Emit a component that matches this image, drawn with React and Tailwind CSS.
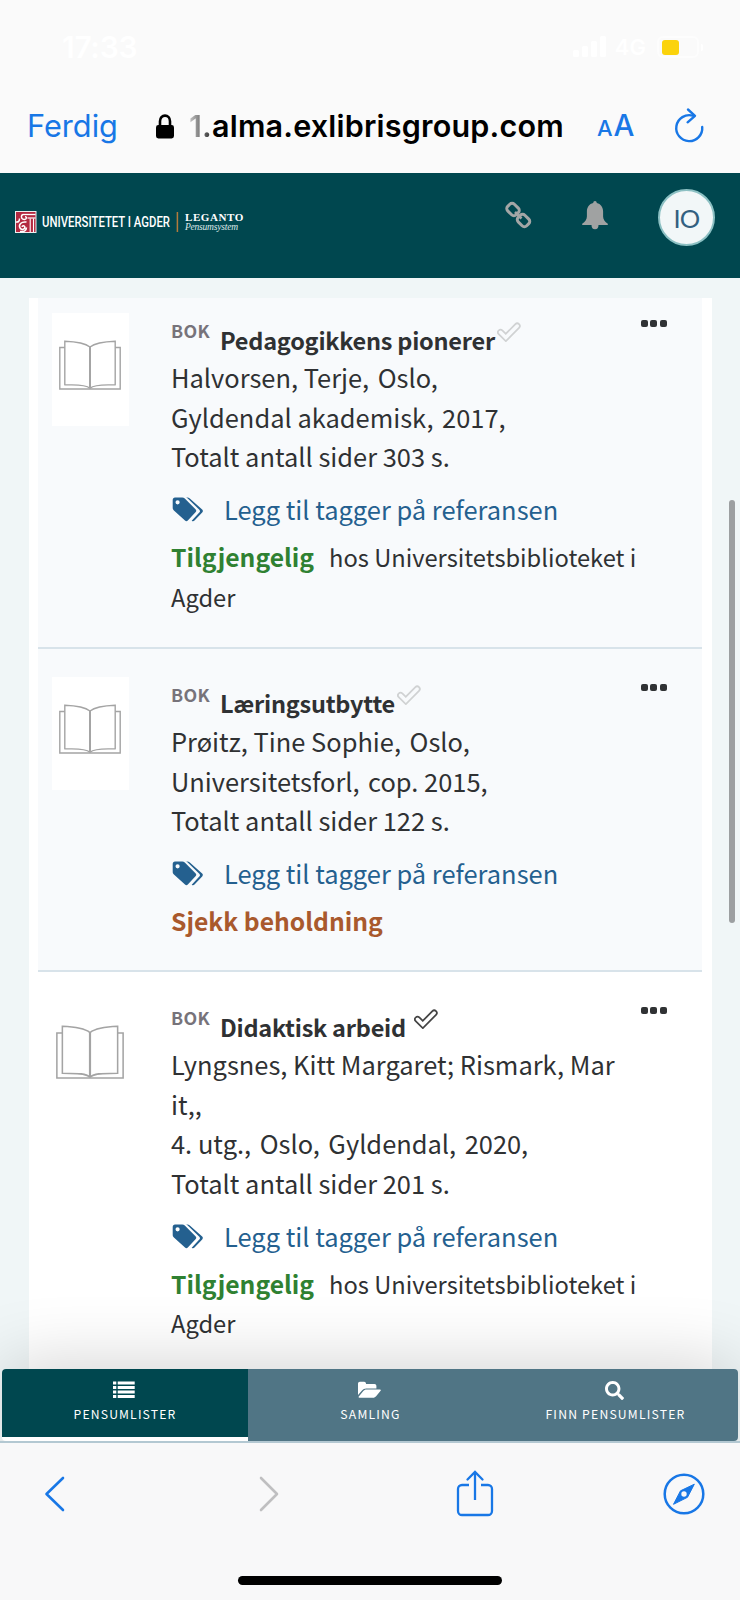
import React from "react";
import { FaSearch } from "react-icons/fa";

const SOURCE = "font-['Noto_Sans_CJK_JP',sans-serif]";

const citations = [
    {
        id: 1,
        title: "Pedagogikkens pionerer",
        lines: [["Halvorsen, Terje,", "Oslo,"], ["Gyldendal akademisk,", "2017,"], ["Totalt antall sider 303 s."]],
        available: true,
        read: false,
        shaded: true,
    },
    {
        id: 2,
        title: "Læringsutbytte",
        lines: [["Prøitz, Tine Sophie,", "Oslo,"], ["Universitetsforl,", "cop. 2015,"], ["Totalt antall sider 122 s."]],
        available: false,
        read: false,
        shaded: true,
    },
    {
        id: 3,
        title: "Didaktisk arbeid",
        lines: [
            ["Lyngsnes, Kitt Margaret; Rismark, Mar"],
            ["it,,"],
            ["4. utg.,", "Oslo,", "Gyldendal,", "2020,"],
            ["Totalt antall sider 201 s."],
        ],
        available: true,
        read: true,
        shaded: false,
    },
];

const StatusBar = () => (
    <div className="flex h-[96px] items-start justify-between pt-[31px] pl-[62px] pr-[37px] text-white">
        <span className="text-[30px] leading-[32px] font-semibold tracking-[-0.3px]">17:33</span>
        <div className="flex items-center pt-[5px]">
            <svg width="34" height="22" viewBox="0 0 34 22" fill="currentColor">
                <rect x="0" y="14" width="6" height="7" rx="1.5" />
                <rect x="9" y="10" width="6" height="11" rx="1.5" />
                <rect x="18" y="5" width="6" height="16" rx="1.5" />
                <rect x="27" y="0" width="6" height="21" rx="1.5" />
            </svg>
            <span className="ml-[8px] text-[22px] leading-[22px] font-semibold">4G</span>
            <div className="ml-[11px] flex h-[22px] w-[42px] items-center rounded-[6px] border-2 border-white/50 pl-[3px]">
                <div className="h-[15px] w-[17px] rounded-[3px] bg-[#fbd30c]" />
            </div>
            <div className="ml-[2px] h-[7px] w-[2px] rounded-r bg-white" />
        </div>
    </div>
);

const AddressBar = () => (
    <div className="flex h-[77px] items-center pl-[27px] pb-[17px] text-[#1877e6]">
        <span className="w-[129px] text-[30.700px] leading-[40px]">Ferdig</span>
        <svg width="18" height="25" viewBox="0 0 18 25" className="shrink-0">
            <path d="M4 12V7.2a5 5.6 0 0 1 10 0V12" fill="none" stroke="#000" strokeWidth="2.6" />
            <rect x="0" y="11" width="18" height="13.5" rx="2.4" fill="#000" />
        </svg>
        <span className="ml-[15px] w-[378px] text-[30.500px] leading-[40px] font-semibold tracking-[0.200px] whitespace-nowrap text-black">
            <span className="bg-linear-to-r from-[#c8c8c8] to-[#333] bg-clip-text text-transparent">1.</span>alma.exlibrisgroup.com
        </span>
        <span className="ml-[30px] flex w-[77px] items-baseline gap-[1px] leading-[40px]">
            <span className="text-[22px] font-medium">A</span>
            <span className="text-[29.500px] font-medium">A</span>
        </span>
        <svg width="30" height="36" viewBox="0 0 30 36" className="-mt-[2px]" fill="none" stroke="currentColor" strokeWidth="2.4" strokeLinecap="round" strokeLinejoin="round">
            <path d="M19 8.700A13 13 0 1 0 28.200 20" />
            <path d="M14 2.500l7 6.300-7.400 6.500" />
        </svg>
    </div>
);

const Logo = () => (
    <svg width="232" height="26" viewBox="0 0 232 26">
        <rect x="0.5" y="2.5" width="20.5" height="21" fill="#b32940" stroke="#eee" strokeWidth="1" />
        <path d="M8 5.500h12.500" stroke="#fff" strokeWidth="1.300" />
        <path d="M12.500 9h8" stroke="#fff" strokeWidth="1.200" />
        <path d="M15.200 9.500V23M18.500 9.500V23" stroke="#fff" strokeWidth="1.100" />
        <path d="M8 5.500c-2.500 1-2 5 1.500 5 2.500-0.300 2.500-3 0.500-2.800" fill="none" stroke="#fff" strokeWidth="1.400" />
        <path d="M1 13c2.500 0.500 3.500-1 3.500-3.500" fill="none" stroke="#fff" strokeWidth="1.500" />
        <path d="M11.500 13c-5.500-0.800-8.200 3-6.500 6 1.500 2.500 5.300 1.300 4.800-1.200-0.500-1.500-2.600-1.200-2.700 0.200M5 22.500c4 0.500 6.500-1 6.500-4" fill="none" stroke="#fff" strokeWidth="1.500" />
        <text x="27" y="18" textLength="128" lengthAdjust="spacingAndGlyphs" className="fill-white font-[Roboto,sans-serif] text-[14px] font-medium">UNIVERSITETET I AGDER</text>
        <path d="M162.400 3v20" stroke="#b27b3c" strokeWidth="1.500" />
        <text x="170" y="11.700" textLength="59" lengthAdjust="spacingAndGlyphs" className="fill-white font-['Liberation_Serif',serif] text-[10px] font-bold tracking-[0.500px]">LEGANTO</text>
        <text x="170" y="20.700" textLength="53" lengthAdjust="spacing" className="fill-[#dfe9ea] font-['Liberation_Serif',serif] text-[9.500px] italic">Pensumsystem</text>
    </svg>
);

const Header = () => (
    <header className="flex h-[105px] bg-[#00474f] pl-[15px]">
        <div className="w-[489px] pt-[36px]">
            <Logo />
        </div>
        <svg width="28" height="28" viewBox="0 0 28 28" className="mt-[28px]" fill="none" stroke="#a3a6a6" strokeWidth="3">
            <rect x="-6" y="-4.700" width="12" height="9.400" rx="3.200" transform="translate(9 8.500) rotate(45)" />
            <rect x="-6" y="-4.700" width="12" height="9.400" rx="3.200" transform="translate(19.500 19.500) rotate(45)" />
            <path d="M11 11l6.500 6.500" strokeWidth="2.600" />
        </svg>
        <svg width="26" height="30" viewBox="0 0 26 30" className="mt-[27px] ml-[50px]" fill="#a0a2a2">
            <path d="M13 1c1.100 0 1.700 0.700 1.800 2 3.900 0.900 6.300 4.200 6.300 8.400v5.200c0 3 1.800 5.200 4.700 7.200V25H0.200v-1.200c2.900-2 4.700-4.200 4.700-7.200v-5.200c0-4.200 2.400-7.500 6.300-8.400C11.300 1.700 11.900 1 13 1z" />
            <path d="M9.500 25h7a3.500 4.200 0 0 1-7 0z" />
        </svg>
        <div className="mt-[16px] ml-[50px] flex h-[57px] w-[57px] items-center justify-center rounded-full border-2 border-[#8cc0c3] bg-[#f2f7f8]">
            <span className="font-[Lato,sans-serif] text-[25.500px] leading-[30px] tracking-[-0.800px] text-[#336080]">IO</span>
        </div>
    </header>
);

const BookIcon = ({ large }) => (
    <svg
        width={large ? 68 : 62}
        height={large ? 54 : 50}
        viewBox="0 0 62 50"
        preserveAspectRatio="none"
        fill="none"
        stroke="#a4a4a4"
        strokeWidth="1.400"
    >
        <path d="M5.800 7.500H0.800V49h60.400V7.500h-5" />
        <path d="M31 7C26 3 14 1.500 5.800 1.200v43.500c9 0.500 20-1 25.200 3.500 5.200-4.500 16.200-3 25.200-3.500V1.200C48 1.500 36 3 31 7z" />
        <path d="M31 7v41" strokeWidth="2" />
    </svg>
);

const TagsIcon = () => (
    <svg width="32" height="26" viewBox="0 0 32 26" fill="currentColor">
        <path
            fillRule="evenodd"
            d="M3 0.500h7.200c1 0 1.900 0.400 2.600 1.100l10.700 10.700c1 1 1 2 0 3l-7.700 8.300c-0.900 0.900-1.900 0.900-2.800 0L1.900 13.500C1 12.600 0.700 11.800 0.700 10.800V3C0.700 1.400 1.600 0.500 3 0.500zM5.600 3.200a2.100 2.100 0 1 0 0 4.200 2.100 2.100 0 0 0 0-4.200z"
        />
        <path d="M13.500 0.500h1.700c1 0 1.900 0.400 2.600 1.100l12.400 11c0.900 0.900 0.900 1.900 0 2.800l-7.700 8.200c-0.900 0.900-1.800 1-2.800 0.200l7.600-8.200c0.900-0.900 0.900-2 0-2.900L16 1.700C15.300 1 14.500 0.600 13.500 0.500z" />
    </svg>
);

const CheckIcon = ({ read, shaded }) => (
    <svg width="24" height="20" viewBox="0 0 24 20" fill="none" strokeLinecap="round">
        <path d="M3.500 10.300l5.300 5.200L20.200 4" stroke={read ? "#444" : "#d0d2d3"} strokeWidth="6.900" />
        <path d="M3.500 10.300l5.300 5.200L20.200 4" stroke={shaded ? "#f8fafc" : "#fff"} strokeWidth="3.400" />
    </svg>
);

const Citation = ({ item }) => (
    <div className={`flex h-auto border-b-2 border-[#d8e3ea] pl-[14px] ${item.shaded ? "bg-[#f8fafc]" : "bg-white"}`}>
        <div className="mt-[28px] flex h-[113px] w-[77px] shrink-0 justify-center bg-white pr-[2px]">
            <div className={item.shaded ? "pt-[27px]" : "pt-[25px]"}>
                <BookIcon large={!item.shaded} />
            </div>
        </div>
        <div className="ml-[42px] w-[470px] shrink-0 pb-[29.700px] text-[#2f3133]">
            <div className="flex h-[72px] items-start">
                <span className="mt-[30px] w-[49px] text-[17.800px] leading-[30px] font-bold tracking-[0.300px] text-[#77737a]">BOK</span>
                <span className="mt-[36.500px] text-[23.500px] leading-[36px] font-bold tracking-[-0.240px] whitespace-nowrap">{item.title}</span>
                <span className={item.read ? "mt-[36.500px] ml-[8px]" : "mt-[36.500px] ml-[2px]"}>
                    <CheckIcon read={item.read} shaded={item.shaded} />
                </span>
            </div>
            {item.lines.map((parts) => (
                <div key={parts[0]} className="flex gap-[8.500px] text-[25.450px] leading-[39.670px] whitespace-nowrap">
                    {parts.map((part) => (
                        <span key={part}>{part}</span>
                    ))}
                </div>
            ))}
            <div className="mt-[13px] flex h-[40px] items-center text-[#24608f]">
                <span className="mt-[2px] ml-[1px]">
                    <TagsIcon />
                </span>
                <span className="ml-[20px] text-[25.450px] leading-[40px] whitespace-nowrap">Legg til tagger på referansen</span>
            </div>
            <div className="mt-[7.800px] text-[23.700px] leading-[39.700px] whitespace-nowrap">
                {item.available ? (
                    <>
                        <div className="flex items-baseline gap-[15px]">
                            <span className="text-[24.700px] font-bold text-[#2f8132]">Tilgjengelig</span>
                            <span>hos Universitetsbiblioteket i</span>
                        </div>
                        <div>Agder</div>
                    </>
                ) : (
                    <div className="text-[24.700px] font-bold text-[#a9592d]">Sjekk beholdning</div>
                )}
            </div>
        </div>
        <div className="mt-[35px] flex h-[7px] gap-[2.300px]">
            <i className="h-[7px] w-[7px] rounded-[2px] bg-[#303234]" />
            <i className="h-[7px] w-[7px] rounded-[2px] bg-[#303234]" />
            <i className="h-[7px] w-[7px] rounded-[2px] bg-[#303234]" />
        </div>
    </div>
);

const ListIcon = () => (
    <svg width="22" height="18" viewBox="0 0 22 18" fill="currentColor">
        {[0.5, 5, 9.5, 14].map((y) => (
            <g key={y}>
                <rect x="0" y={y} width="3.300" height="3" />
                <rect x="4.700" y={y} width="17" height="3" />
            </g>
        ))}
    </svg>
);

const FolderIcon = () => (
    <svg width="23" height="18" viewBox="0 0 23 18" fill="currentColor">
        <path d="M0 14V2.600C0 1.500 0.800 0.700 1.900 0.700h4.200C7.200 0.700 8 1.500 8 2.600v0.500h8.500c1.100 0 1.900 0.800 1.900 1.900v2.400H8.200C6.600 7.400 5 8.200 4 9.400z" />
        <path d="M5.300 10.100c0.700-0.900 1.900-1.500 3-1.500H22c0.800 0 1.100 0.600 0.600 1.200l-4.500 5.400c-0.700 0.900-1.900 1.500-3 1.500H1.400c-0.800 0-1.100-0.600-0.600-1.200z" />
    </svg>
);

const TabBar = () => (
    <nav className="relative mx-[2px] flex h-[72px] rounded-[4px] bg-white text-white shadow-[0_0_75px_rgba(0,0,0,0.2)]">
        <div className="flex h-[68px] w-[246px] flex-col items-center rounded-tl-[4px] bg-[#00474f] pt-[12px] pr-[3px]">
            <ListIcon />
            <span className="mt-[4px] ml-[3px] text-[12.200px] leading-[22px] tracking-[1.150px]">PENSUMLISTER</span>
        </div>
        <div className="flex w-[245px] flex-col items-center bg-[#507585] pt-[12px] pr-[2px]">
            <FolderIcon />
            <span className="mt-[4px] ml-[2px] text-[12.200px] leading-[22px] tracking-[1.200px]">SAMLING</span>
        </div>
        <div className="flex w-[245px] flex-col items-center rounded-r-[4px] bg-[#507585] pt-[12px] pr-[2px]">
            <FaSearch className="h-[19px] w-[19px]" />
            <span className="mt-[3px] ml-[2px] text-[12.200px] leading-[22px] tracking-[1.200px]">FINN PENSUMLISTER</span>
        </div>
    </nav>
);

const BrowserToolbar = () => (
    <footer className="flex h-[159px] flex-col items-center border-t-2 border-[#b3c8d2] bg-[#f8f8f9] text-[#1877e6]">
        <div className="flex w-full items-center pt-[28px] pl-[44px]">
            <svg width="22" height="36" viewBox="0 0 22 36" fill="none" stroke="currentColor" strokeWidth="2.600" strokeLinecap="round" strokeLinejoin="round">
                <path d="M19 2L2.500 18 19 34" />
            </svg>
            <svg width="22" height="36" viewBox="0 0 22 36" className="ml-[192px]" fill="none" stroke="#bfbfc1" strokeWidth="2.600" strokeLinecap="round" strokeLinejoin="round">
                <path d="M3 2l16 16L3 34" />
            </svg>
            <svg width="38" height="48" viewBox="0 0 38 48" className="-mt-[2px] ml-[176px]" fill="none" stroke="currentColor" strokeWidth="2.300">
                <path d="M13 16H6a4 4 0 0 0-4 4v22a4 4 0 0 0 4 4h26a4 4 0 0 0 4-4V20a4 4 0 0 0-4-4h-7" />
                <path d="M19 31V3" />
                <path d="M11.500 10.500L19 3l7.500 7.500" strokeLinecap="round" />
            </svg>
            <svg width="42" height="42" viewBox="0 0 42 42" className="ml-[168.500px]">
                <circle cx="21" cy="21" r="19.300" fill="none" stroke="currentColor" strokeWidth="2.500" />
                <path d="M31.300 11.200L24.500 24.300 10.500 31.300 17.500 17.800z" fill="currentColor" stroke="currentColor" strokeLinejoin="round" />
                <circle cx="21" cy="21" r="2.700" fill="#f8f8f9" />
            </svg>
        </div>
        <div className="mt-auto mb-[15px] h-[9px] w-[264px] rounded-full bg-black" />
    </footer>
);

export default function App() {
    return (
        <div className="flex h-[1600px] w-[740px] flex-col overflow-hidden bg-[#fafafa] font-[Inter,sans-serif]">
            <StatusBar />
            <AddressBar />
            <Header />
            <main className={`relative flex h-[1163px] flex-col overflow-hidden bg-[#f0f6f7] ${SOURCE}`}>
                <div className="mx-[28.500px] mt-[20px] flex h-[1071px] shrink-0 flex-col overflow-hidden bg-white px-[9.500px]">
                    <div className="-mt-[13px] shrink-0">
                        {citations.map((item) => (
                            <Citation key={item.id} item={item} />
                        ))}
                    </div>
                </div>
                {/* scroll indicator */}
                <div className="absolute top-[222px] right-[5px] h-[423px] w-[6px] rounded-full bg-[#9c9fa1]" />
                <TabBar />
            </main>
            <BrowserToolbar />
        </div>
    );
}
